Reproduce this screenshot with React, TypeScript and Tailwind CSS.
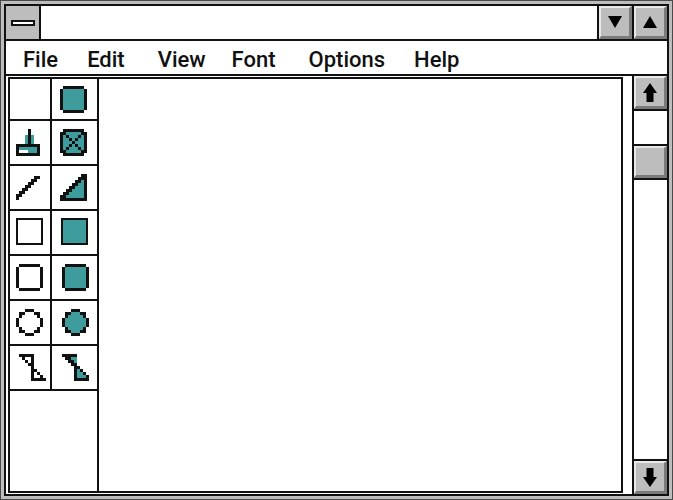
const px = 3

const palette: Record<string, string> = {
  '#': '#111111',
  t: '#3f9c9c',
  w: '#ffffff',
}

// tool icons are bitmaps on a 3px grid
function Bitmap({ rows, className }: { rows: string[]; className?: string }) {
  const w = rows[0].length * px
  const h = rows.length * px
  return (
    <svg width={w} height={h} viewBox={`0 0 ${w} ${h}`} shapeRendering="crispEdges" className={className}>
      {rows.map((row, y) =>
        row.split('').map((c, x) =>
          palette[c] ? <rect key={`${x}-${y}`} x={x * px} y={y * px} width={px} height={px} fill={palette[c]} /> : null,
        ),
      )}
    </svg>
  )
}

const roundFilled = ['.#######.', '#ttttttt#', '#ttttttt#', '#ttttttt#', '#ttttttt#', '#ttttttt#', '#ttttttt#', '#ttttttt#', '.#######.']
const textTool = ['....#...', '....#...', '...t#t..', '...t#t..', '...t#t..', '########', '#tttttt#', '#wwwttt#', '########']
const crossBox = ['.#######.', '##ttttt##', '#t#ttt#t#', '#tt#t#tt#', '#ttt#ttt#', '#tt#t#tt#', '#t#ttt#t#', '##ttttt##', '.#######.']
const line = ['......##', '.....##.', '....##..', '...##...', '..##....', '.##.....', '##......', '#.......']
const wedge = ['.......##', '......###', '.....##t#', '....##tt#', '...##ttt#', '..##tttt#', '.##ttttt#', '##tttttt#', '#########']
const roundOpen = ['.#######.', '#.......#', '#.......#', '#.......#', '#.......#', '#.......#', '#.......#', '#.......#', '.#######.']
const circleOpen = ['...###...', '.##...##.', '.#.....#.', '#.......#', '#.......#', '#.......#', '.#.....#.', '.##...##.', '...###...']
const circleFilled = ['...###...', '.##ttt##.', '.#ttttt#.', '#ttttttt#', '#ttttttt#', '#ttttttt#', '.#ttttt#.', '.##ttt##.', '...###...']
const bowOpen = ['#####....', '.#..#....', '..#.#....', '...##....', '....#....', '....##...', '....#.#..', '....#..#.', '....#####']
const bowFilled = ['#####....', '.##tt....', '..##t....', '...##....', '....##...', '....#t#..', '....#tt#.', '....#ttt#', '....#####']

function Cell({ children, className = '' }: { children?: React.ReactNode; className?: string }) {
  return <div className={`flex items-center justify-center ${className}`}>{children}</div>
}

function Square({ filled, className = '' }: { filled?: boolean; className?: string }) {
  return <div className={`h-[27px] w-[27px] border-2 border-[#111] ${filled ? 'bg-[#3f9c9c]' : 'bg-white'} ${className}`} />
}

const rows: { h: string; left: React.ReactNode; right: React.ReactNode }[] = [
  { h: 'h-[42px]', left: null, right: <Bitmap rows={roundFilled} className="mr-[2px]" /> },
  { h: 'h-[45px]', left: <Bitmap rows={textTool} className="mr-[4px]" />, right: <Bitmap rows={crossBox} className="mr-[2px]" /> },
  { h: 'h-[45px]', left: <Bitmap rows={line} className="mr-[4px]" />, right: <Bitmap rows={wedge} className="mr-[2px]" /> },
  { h: 'h-[45px]', left: <Square className="mb-[2px] mr-px" />, right: <Square filled className="mb-[2px]" /> },
  { h: 'h-[45px]', left: <Bitmap rows={roundOpen} className="mr-px" />, right: <Bitmap rows={roundFilled} className="ml-[1px]" /> },
  { h: 'h-[45px]', left: <Bitmap rows={circleOpen} className="mr-px" />, right: <Bitmap rows={circleFilled} className="ml-[1px]" /> },
  { h: 'h-[45px]', left: <Bitmap rows={bowOpen} className="ml-[4px]" />, right: <Bitmap rows={bowFilled} className="ml-[1px]" /> },
]

const bevel = 'bg-[#bdbdbd] border-2 border-r-[3px] border-b-[3px] border-t-[#e8e8e8] border-l-[#e8e8e8] border-r-[#7b7b7b] border-b-[#7b7b7b] flex items-center justify-center'

function Triangle({ up }: { up?: boolean }) {
  return (
    <svg width="14" height="12" viewBox="0 0 14 12">
      <path d={up ? 'M7 0L14 12H0Z' : 'M0 0H14L7 12Z'} fill="#000" />
    </svg>
  )
}

function Arrow({ up }: { up?: boolean }) {
  return (
    <svg width="14" height="19" viewBox="0 0 14 19" className={up ? '' : 'rotate-180'}>
      <path d="M7 0L14 10H10.5V19H3.5V10H0Z" fill="#000" />
    </svg>
  )
}

export default function App() {
  return (
    <div className="h-[500px] w-[673px] overflow-hidden border border-[#4a4a4a] bg-[#bdbdbd] p-[3px] font-['Roboto',sans-serif]">
      <div className="flex h-full flex-col border-2 border-[#111] bg-white">
        <div className="flex h-[35px] shrink-0 border-b-2 border-[#111]">
          <div className="flex w-[35px] items-center justify-center border-r-2 border-[#111] bg-[#bdbdbd]">
            <div className="h-[6px] w-[24px] border-2 border-[#111] bg-white" />
          </div>
          <div className="flex-1" />
          <div className="w-[37px] border-x-2 border-[#111]">
            <div className={`h-full ${bevel}`}>
              <Triangle />
            </div>
          </div>
          <div className="w-[33px]">
            <div className={`h-full ${bevel}`}>
              <Triangle up />
            </div>
          </div>
        </div>

        <div className="flex h-[35px] shrink-0 items-center border-b-2 border-[#111] pt-[3px] pl-[17px] text-[22px] font-medium text-[#111]">
          <span>File</span>
          <span className="ml-[29px]">Edit</span>
          <span className="ml-[33px]">View</span>
          <span className="ml-[26px]">Font</span>
          <span className="ml-[33px]">Options</span>
          <span className="ml-[29px]">Help</span>
        </div>

        <div className="flex min-h-0 flex-1">
          <div className="mt-px mb-px ml-[2px] flex w-[615px] border-2 border-[#111]">
            <div className="w-[89px] shrink-0 border-r-2 border-[#111]">
              {rows.map((row, i) => (
                <div key={i} className={`flex border-b-2 border-[#111] ${row.h}`}>
                  <Cell className="w-[42px] border-r-2 border-[#111]">{row.left}</Cell>
                  <Cell className="flex-1">{row.right}</Cell>
                </div>
              ))}
            </div>
            <div className="flex-1" />
          </div>

          <div className="ml-auto flex w-[35px] flex-col border-l-2 border-[#111]">
            <div className={`h-[33px] shrink-0 ${bevel}`}>
              <Arrow up />
            </div>
            <div className="h-[37px] shrink-0 border-y-2 border-[#111]" />
            <div className={`h-[32px] shrink-0 ${bevel}`} />
            <div className="flex-1 border-y-2 border-[#111]" />
            <div className={`h-[33px] shrink-0 ${bevel}`}>
              <Arrow />
            </div>
          </div>
        </div>
      </div>
    </div>
  )
}
